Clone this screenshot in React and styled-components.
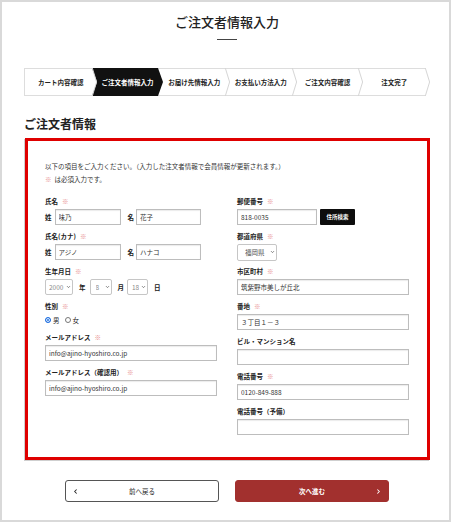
import React from 'react';
import styled, { createGlobalStyle, css } from 'styled-components';
import { ChevronLeft, ChevronRight, ChevronDown } from 'lucide-react';

const GlobalStyle = createGlobalStyle`
  html, body { margin: 0; padding: 0; background: #fff; }
  body { font-family: "Noto Sans CJK JP", "Noto Sans", sans-serif; color: #222; }
  *, *::before, *::after { box-sizing: border-box; }
`;

const Page = styled.div`
  width: 451px;
  height: 522px;
  border: 2px solid #d9d9d9;
  background: #fff;
  display: flex;
  flex-direction: column;
  padding: 0 19px 0 22px;
`;

const Title = styled.h1`
  margin: 12px 0 0;
  font-size: 13px;
  line-height: 16px;
  font-weight: 500;
  text-align: center;
  color: #222;
`;

const Rule = styled.div`
  width: 20px;
  height: 1px;
  background: #444;
  margin: 9px auto 0;
`;

const StepBar = styled.ol`
  display: flex;
  width: 401px;
  height: 28px;
  margin: 28px 0 0;
  padding: 0;
  list-style: none;
  border: 1px solid #ddd;
  border-right: none;
`;

const StepItem = styled.li`
  position: relative;
  flex: 1;
  display: flex;
  align-items: center;
  justify-content: center;
  padding-left: 5px;
  font-size: 6.5px;
  font-weight: 700;
  color: ${p => (p.$active ? '#fff' : '#222')};
  ${p =>
    p.$active &&
    css`
      &::before {
        content: '';
        position: absolute;
        left: 0;
        right: 0;
        top: -1px;
        bottom: -1px;
        background: #111;
        z-index: 0;
      }
    `}
`;

const StepLabel = styled.span`
  position: relative;
  z-index: 1;
  white-space: nowrap;
`;

const ChevronSvg = styled.svg`
  position: absolute;
  top: -1px;
  right: -5px;
  width: 5px;
  height: 28px;
  overflow: visible;
  z-index: 2;
`;

const SectionHeading = styled.h2`
  margin: 21px 0 0;
  font-size: 12px;
  line-height: 14px;
  font-weight: 700;
  color: #222;
`;

const FormBox = styled.section`
  margin: 7px 0 0 1px;
  width: 405px;
  border: 3px solid #df0000;
  box-shadow: -1px 1px 0 #cfcfcf;
  padding: 19px 18px 22px 17px;
`;

const Intro = styled.p`
  margin: 0 0 10px;
  font-size: 6.5px;
  line-height: 13px;
  color: #333;
`;

const Req = styled.span`
  color: #e88c8c;
  margin-left: ${p => (p.$inline ? '0' : '4px')};
  margin-right: ${p => (p.$inline ? '3px' : '0')};
  font-weight: 400;
`;

const Grid = styled.div`
  display: grid;
  grid-template-columns: 172px 172px;
  column-gap: 20px;
  align-items: start;
`;

const Column = styled.div`
  display: flex;
  flex-direction: column;
  gap: 6px;
`;

const Field = styled.div`
  display: flex;
  flex-direction: column;
  gap: 3px;
`;

const Label = styled.div`
  font-size: 6.5px;
  line-height: 10px;
  font-weight: 700;
  color: #222;
  white-space: nowrap;
`;

const Row = styled.div`
  display: flex;
  align-items: center;
  height: ${p => p.$h || 16}px;
`;

const Tag = styled.span`
  font-size: 6.5px;
  font-weight: 700;
  color: #222;
  margin-left: ${p => p.$ml || 0}px;
  margin-right: ${p => p.$mr || 0}px;
`;

const TextInput = styled.input`
  width: ${p => p.$w || 172}px;
  height: 16px;
  margin: 0;
  padding: 0 3px;
  border: 1px solid #bdbdbd;
  border-radius: 0;
  box-shadow: inset 0 1px 1px rgba(0, 0, 0, 0.08);
  background: #fff;
  font-family: inherit;
  font-size: 6.5px;
  color: #333;
  outline: none;
`;

const SearchButton = styled.button`
  margin-left: 3px;
  width: 35px;
  height: 16px;
  padding: 0;
  border: none;
  border-radius: 1px;
  background: #0d0d0d;
  color: #fff;
  font-family: inherit;
  font-size: 5.5px;
  font-weight: 700;
`;

const SelectWrap = styled.span`
  position: relative;
  display: inline-flex;
  width: ${p => p.$w}px;
  height: ${p => p.$h || 16}px;
`;

const Select = styled.select`
  appearance: none;
  -webkit-appearance: none;
  width: 100%;
  height: 100%;
  margin: 0;
  padding: 0 8px 0 ${p => p.$pl || 4}px;
  border: 1px solid #c6c6c6;
  border-radius: 2px;
  background: #fff;
  font-family: inherit;
  font-size: 6.5px;
  color: ${p => p.$color || '#8a8a8a'};
  outline: none;
`;

const Caret = styled(ChevronDown)`
  position: absolute;
  right: 2px;
  top: 50%;
  transform: translateY(-50%);
  pointer-events: none;
  color: #444;
`;

const Radio = styled.input.attrs({ type: 'radio' })`
  appearance: none;
  -webkit-appearance: none;
  width: 6px;
  height: 6px;
  margin: 0 2px 0 ${p => p.$ml || 0}px;
  border-radius: 50%;
  border: 1px solid #777;
  background: #fff;
  &:checked {
    border-color: #1f6fe0;
    background: #1f6fe0;
    box-shadow: inset 0 0 0 1px #fff;
  }
`;

const RadioText = styled.span`
  font-size: 6.5px;
  color: #222;
`;

const ButtonRow = styled.div`
  display: flex;
  justify-content: center;
  gap: 16px;
  margin-top: 20px;
`;

const NavButton = styled.button`
  width: 154px;
  height: 22px;
  display: flex;
  align-items: center;
  justify-content: space-between;
  padding: 0 6px;
  border-radius: 3px;
  font-family: inherit;
  font-size: 6.5px;
  ${p =>
    p.$primary
      ? css`
          background: #a2302e;
          border: 1px solid #a2302e;
          color: #fff;
          font-weight: 700;
        `
      : css`
          background: #fff;
          border: 1px solid #555;
          color: #222;
        `}
`;

const IconSlot = styled.span`
  width: 7px;
  display: inline-flex;
  justify-content: center;
`;

const steps = ['カート内容確認', 'ご注文者情報入力', 'お届け先情報入力', 'お支払い方法入力', 'ご注文内容確認', '注文完了'];

function Chevron({ active }) {
  return (
    <ChevronSvg viewBox="0 0 5 28" preserveAspectRatio="none">
      <polygon points="0,0 5,14 0,28" fill={active ? '#111' : '#fff'} />
      {!active && <polyline points="0.3,0 4.6,14 0.3,28" fill="none" stroke="#d6d6d6" strokeWidth="1" />}
    </ChevronSvg>
  );
}

function Dropdown({ w, h, pl, color, value }) {
  return (
    <SelectWrap $w={w} $h={h}>
      <Select $pl={pl} $color={color} defaultValue={value}>
        <option value={value}>{value}</option>
      </Select>
      <Caret size={5} strokeWidth={3} />
    </SelectWrap>
  );
}

function FieldLabel({ children, required }) {
  return (
    <Label>
      {children}
      {required && <Req>※</Req>}
    </Label>
  );
}

export default function App() {
  return (
    <>
      <GlobalStyle />
      <Page>
        <Title>ご注文者情報入力</Title>
        <Rule />
        <StepBar>
          {steps.map((s, i) => (
            <StepItem key={s} $active={i === 1}>
              <StepLabel>{s}</StepLabel>
              <Chevron active={i === 1} />
            </StepItem>
          ))}
        </StepBar>
        <SectionHeading>ご注文者情報</SectionHeading>
        <FormBox>
          <Intro>
            以下の項目をご入力ください。（入力した注文者情報で会員情報が更新されます。）
            <br />
            <Req $inline>※</Req>は必須入力です。
          </Intro>
          <Grid>
            <Column>
              <Field>
                <FieldLabel required>氏名</FieldLabel>
                <Row>
                  <Tag $mr={3}>姓</Tag>
                  <TextInput $w={66} defaultValue="味乃" />
                  <Tag $ml={7} $mr={2}>名</Tag>
                  <TextInput $w={65} defaultValue="花子" />
                </Row>
              </Field>
              <Field>
                <FieldLabel required>氏名(カナ)</FieldLabel>
                <Row>
                  <Tag $mr={3}>姓</Tag>
                  <TextInput $w={66} defaultValue="アジノ" />
                  <Tag $ml={7} $mr={2}>名</Tag>
                  <TextInput $w={65} defaultValue="ハナコ" />
                </Row>
              </Field>
              <Field>
                <FieldLabel required>生年月日</FieldLabel>
                <Row>
                  <Dropdown w={28} value="2000" pl={3} />
                  <Tag $ml={6} $mr={4}>年</Tag>
                  <Dropdown w={22} value="8" pl={5} />
                  <Tag $ml={6} $mr={3}>月</Tag>
                  <Dropdown w={21} value="18" pl={4} />
                  <Tag $ml={6}>日</Tag>
                </Row>
              </Field>
              <Field>
                <FieldLabel required>性別</FieldLabel>
                <Row $h={12}>
                  <Radio name="sex" defaultChecked />
                  <RadioText>男</RadioText>
                  <Radio name="sex" $ml={5} />
                  <RadioText>女</RadioText>
                </Row>
              </Field>
              <Field>
                <FieldLabel required>メールアドレス</FieldLabel>
                <TextInput defaultValue="info@ajino-hyoshiro.co.jp" />
              </Field>
              <Field>
                <FieldLabel required>メールアドレス（確認用）</FieldLabel>
                <TextInput defaultValue="info@ajino-hyoshiro.co.jp" />
              </Field>
            </Column>
            <Column>
              <Field>
                <FieldLabel required>郵便番号</FieldLabel>
                <Row>
                  <TextInput $w={80} defaultValue="818-0035" />
                  <SearchButton type="button">住所検索</SearchButton>
                </Row>
              </Field>
              <Field>
                <FieldLabel required>都道府県</FieldLabel>
                <Row>
                  <Dropdown w={40} h={17} value="福岡県" pl={7} color="#555" />
                </Row>
              </Field>
              <Field>
                <FieldLabel required>市区町村</FieldLabel>
                <TextInput defaultValue="筑紫野市美しが丘北" />
              </Field>
              <Field>
                <FieldLabel required>番地</FieldLabel>
                <TextInput defaultValue="３丁目１－３" />
              </Field>
              <Field>
                <FieldLabel>ビル・マンション名</FieldLabel>
                <TextInput defaultValue="" />
              </Field>
              <Field>
                <FieldLabel required>電話番号</FieldLabel>
                <TextInput defaultValue="0120-849-888" />
              </Field>
              <Field>
                <FieldLabel>電話番号（予備）</FieldLabel>
                <TextInput defaultValue="" />
              </Field>
            </Column>
          </Grid>
        </FormBox>
        <ButtonRow>
          <NavButton type="button">
            <IconSlot><ChevronLeft size={7} strokeWidth={3.5} /></IconSlot>
            <span>前へ戻る</span>
            <IconSlot />
          </NavButton>
          <NavButton type="button" $primary>
            <IconSlot />
            <span>次へ進む</span>
            <IconSlot><ChevronRight size={7} strokeWidth={3.5} /></IconSlot>
          </NavButton>
        </ButtonRow>
      </Page>
    </>
  );
}
